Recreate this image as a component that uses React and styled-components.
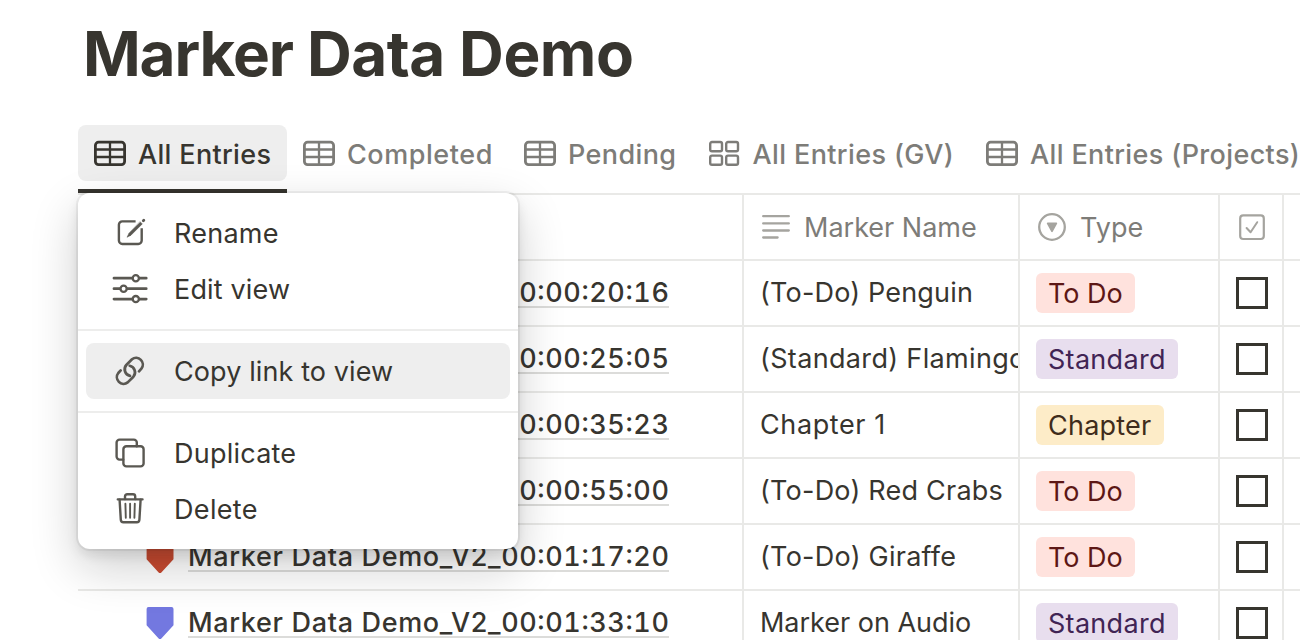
import React from "react";
import styled, { createGlobalStyle } from "styled-components";

const ink = "#37352f";
const muted = "#7d7c78";
const line = "#e9e9e7";

const GlobalStyle = createGlobalStyle`
  *, *::before, *::after { box-sizing: border-box; }
  body {
    margin: 0;
    background: #fff;
    color: ${ink};
    font-family: Inter, "Liberation Sans", sans-serif;
    -webkit-font-smoothing: antialiased;
  }
`;

const Page = styled.div`
  width: 1300px;
  height: 640px;
  overflow: hidden;
  padding-left: 78px;
`;

const Title = styled.h1`
  margin: 0;
  height: 125px;
  padding: 13px 0 0 5px;
  font-size: 62px;
  font-weight: 700;
  line-height: 81px;
  letter-spacing: -0.48px;
  white-space: nowrap;
`;

const TitleLead = styled.span`
  letter-spacing: -1.15px;
`;

const TabBar = styled.nav`
  display: flex;
  height: 70px;
  border-bottom: 2px solid ${line};
`;

const TabSlot = styled.div`
  position: relative;
  flex: none;
  width: ${(p) => p.$width}px;
  height: 68px;
  border-bottom: ${(p) => (p.$active ? `4px solid ${ink}` : "0")};
`;

const Tab = styled.div`
  display: flex;
  align-items: center;
  gap: 12px;
  height: 56px;
  padding: 0 16px;
  border-radius: 8px;
  background: ${(p) => (p.$active ? "#eeeeee" : "transparent")};
  color: ${(p) => (p.$active ? ink : muted)};
  font-size: 27px;
  font-weight: 500;
  letter-spacing: ${(p) => p.$spacing}px;
  white-space: nowrap;
  svg { flex: none; }
  span { padding-top: 2px; }
`;

const Menu = styled.div`
  position: absolute;
  z-index: 2;
  top: 68px;
  left: 0;
  width: 440px;
  border-radius: 12px;
  background: #fff;
  box-shadow: 0 0 0 2px rgba(15, 15, 15, 0.05), 0 6px 12px rgba(15, 15, 15, 0.1),
    0 18px 48px rgba(15, 15, 15, 0.2);
`;

const MenuGroup = styled.div`
  padding: 12px 8px;
  & + & { border-top: 2px solid #ededec; }
`;

const MenuItem = styled.div`
  display: flex;
  align-items: center;
  height: 56px;
  padding-left: 19px;
  gap: 19px;
  border-radius: 8px;
  background: ${(p) => (p.$active ? "#eeeeee" : "transparent")};
  font-size: 27px;
  letter-spacing: ${(p) => p.$spacing}px;
  white-space: nowrap;
  svg { flex: none; }
`;

const Row = styled.div`
  display: grid;
  grid-template-columns: 666px 276px 200px 64px 1fr;
  height: 66px;
  border-bottom: 2px solid ${line};
`;

const Cell = styled.div`
  display: flex;
  align-items: center;
  min-width: 0;
  overflow: hidden;
  padding-left: 16px;
  border-right: 2px solid ${line};
  font-size: 27px;
  letter-spacing: ${(p) => p.$spacing || 0}px;
  white-space: nowrap;
  &:last-child { border-right: 0; }
`;

const HeadCell = styled(Cell)`
  padding-left: 18px;
  gap: 14px;
  color: ${muted};
  svg { flex: none; }
`;

const NameCell = styled(Cell)`
  padding-left: 68px;
  gap: 14px;
  font-weight: 500;
  svg { flex: none; }
`;

const EntryLink = styled.span`
  width: 481px;
  height: 30px;
  line-height: 30px;
  border-bottom: 2px solid #dcdcda;
`;

const Prefix = styled.span`
  letter-spacing: 0.67px;
`;

const Timecode = styled.span`
  letter-spacing: 0.6px;
  font-variant-numeric: tabular-nums;
  font-feature-settings: "calt", "case";
`;

const Label = styled.span`
  margin-top: -2px;
`;

const tones = {
  red: ["#ffe2dd", "#5d1715"],
  purple: ["#e8deee", "#412454"],
  yellow: ["#fdecc8", "#402c1b"],
};

const Tag = styled.span`
  display: flex;
  align-items: center;
  height: 40px;
  width: ${(p) => p.$width}px;
  padding-left: 12px;
  border-radius: 6px;
  background: ${(p) => tones[p.$tone][0]};
  color: ${(p) => tones[p.$tone][1]};
  letter-spacing: ${(p) => p.$spacing}px;
`;

const Checkbox = styled.span`
  width: 32px;
  height: 32px;
  border: 3px solid ${ink};
`;

const TableIcon = () => (
  <svg width="32" height="26" viewBox="0 0 32 26" fill="none" stroke="currentColor">
    <rect x="1.4" y="2.2" width="29.2" height="22.4" rx="3.2" strokeWidth="2.8" />
    <path d="M16 2.5v22M2 9.5h28M2 17h28" strokeWidth="2.3" />
  </svg>
);

const GalleryIcon = () => (
  <svg width="32" height="26" viewBox="0 0 32 26" fill="none" stroke="currentColor" strokeWidth="2.4">
    <rect x="1.2" y="2" width="11.8" height="9.2" rx="1.8" />
    <rect x="17.2" y="2" width="11.8" height="9.2" rx="1.8" />
    <rect x="1.2" y="15.6" width="11.8" height="9.2" rx="1.8" />
    <rect x="17.2" y="15.6" width="11.8" height="9.2" rx="1.8" />
  </svg>
);

const MenuSvg = ({ children }) => (
  <svg
    width="50"
    height="50"
    viewBox="0 0 50 50"
    fill="none"
    stroke="#5a5852"
    strokeWidth="2.4"
    strokeLinecap="round"
    strokeLinejoin="round"
  >
    {children}
  </svg>
);

const RenameIcon = () => (
  <MenuSvg>
    <path
      d="M30.6 13.4H17.3a3.4 3.4 0 0 0-3.4 3.4v15.8a3.4 3.4 0 0 0 3.4 3.4h16a3.4 3.4 0 0 0 3.4-3.4V20.2"
      strokeLinecap="butt"
    />
    <path d="M35.3 13.9 37.3 15.9 26 27.2 22 29.3 24 25.2Z" fill="#5a5852" stroke="#5a5852" strokeWidth="0.5" />
    <path d="m38.3 12.7.5-.5" strokeWidth="2.8" />
  </MenuSvg>
);

const SlidersIcon = () => (
  <MenuSvg>
    <path d="M9 14.2h32.2M9 24.7h32.2M9 35.1h32.2" strokeWidth="2.8" />
    <g fill="#fff" strokeWidth="2.3">
      <circle cx="30.8" cy="14.2" r="3.1" />
      <circle cx="18.6" cy="24.7" r="3.1" />
      <circle cx="30.8" cy="35.1" r="3.1" />
    </g>
  </MenuSvg>
);

const LinkIcon = () => (
  <MenuSvg>
    <path d="M34 25.3 36.4 22.7A6.7 6.7 0 0 0 27 13.3L21.3 19A6.7 6.7 0 0 0 25 29.9" strokeWidth="2.7" />
    <path d="M15.7 24.4 13.3 27A6.7 6.7 0 0 0 22.7 36.4L28.4 30.7A6.7 6.7 0 0 0 24.7 19.8" strokeWidth="2.7" />
  </MenuSvg>
);

const DuplicateIcon = () => (
  <MenuSvg>
    <rect x="18.4" y="18.2" width="20.2" height="20.2" rx="3" />
    <path d="M18.2 31.6h-3.6a3 3 0 0 1-3-3V14.6a3 3 0 0 1 3-3h14.2a3 3 0 0 1 3 3v3.6" />
  </MenuSvg>
);

const TrashIcon = () => (
  <MenuSvg>
    <path d="M12.7 15.4h24.9" strokeWidth="2.2" />
    <path d="M20 15v-2.6a2.2 2.2 0 0 1 2.2-2.2h5.8a2.2 2.2 0 0 1 2.2 2.2V15" />
    <path d="m14.6 15.8 1.2 19.9a2.6 2.6 0 0 0 2.6 2.5h13.4a2.6 2.6 0 0 0 2.6-2.5L35.6 15.8" />
    <path d="m20.4 19.8.4 14M25.1 19.8v14M29.8 19.8l-.4 14" strokeWidth="1.9" />
  </MenuSvg>
);

const TextIcon = () => (
  <svg width="28" height="28" viewBox="0 0 28 28" stroke="#a5a49f" strokeWidth="2.3" strokeLinecap="round">
    <path d="M1.2 3.2h25.6M1.2 10.4h25.6M1.2 17.5h25.6M1.2 24.5h14.4" />
  </svg>
);

const SelectIcon = () => (
  <svg width="28" height="28" viewBox="0 0 28 28" fill="none">
    <circle cx="14" cy="14" r="12.8" stroke="#a5a49f" strokeWidth="2.3" />
    <path d="M9.6 10.4h8.8L14 18.4Z" fill="#a5a49f" stroke="#a5a49f" strokeWidth="1.6" strokeLinejoin="round" />
  </svg>
);

const CheckIcon = () => (
  <svg
    width="28"
    height="28"
    viewBox="0 0 28 28"
    fill="none"
    stroke="#a5a49f"
    strokeWidth="2.2"
    strokeLinecap="round"
    strokeLinejoin="round"
  >
    <rect x="2.2" y="2.4" width="23.6" height="23.6" rx="3" />
    <path d="m8.6 15 4 4.2 6.6-10" strokeWidth="2" />
  </svg>
);

const Marker = ({ color }) => (
  <svg width="28" height="34" viewBox="0 0 28 34" fill={color}>
    <path d="M2.5 1h23a2 2 0 0 1 2 2v16.2L15.6 32.2a2.2 2.2 0 0 1-3.2 0L.6 19.2V3a2 2 0 0 1 1.9-2Z" />
  </svg>
);

const tabs = [
  { label: "All Entries", width: 209, spacing: 0.33, active: true, icon: TableIcon },
  { label: "Completed", width: 221, spacing: 0.55, icon: TableIcon },
  { label: "Pending", width: 184.5, spacing: 0.38, icon: TableIcon },
  { label: "All Entries (GV)", width: 277.5, spacing: 0.38, icon: GalleryIcon },
  { label: "All Entries (Projects)", width: 330, spacing: 0.36, icon: TableIcon },
];

const menu = [
  [
    { label: "Rename", spacing: 0.25, icon: RenameIcon },
    { label: "Edit view", spacing: 0.16, icon: SlidersIcon },
  ],
  [{ label: "Copy link to view", spacing: 0.1, icon: LinkIcon, active: true }],
  [
    { label: "Duplicate", spacing: 0.23, icon: DuplicateIcon },
    { label: "Delete", spacing: 0.33, icon: TrashIcon },
  ],
];

const types = {
  todo: { label: "To Do", tone: "red", width: 99, spacing: -0.05 },
  standard: { label: "Standard", tone: "purple", width: 142, spacing: 0.3 },
  chapter: { label: "Chapter", tone: "yellow", width: 128, spacing: 0.22 },
};

const rows = [
  { time: "00:00:20:16", name: "(To-Do) Penguin", spacing: 0.18, type: "todo", color: "#c94a30" },
  { time: "00:00:25:05", name: "(Standard) Flamingo", spacing: 0.34, type: "standard", color: "#7378e0" },
  { time: "00:00:35:23", name: "Chapter 1", spacing: 0.6, type: "chapter", color: "#e09a3c" },
  { time: "00:00:55:00", name: "(To-Do) Red Crabs", spacing: 0.22, type: "todo", color: "#c94a30" },
  { time: "00:01:17:20", name: "(To-Do) Giraffe", spacing: 0.25, type: "todo", color: "#c94a30" },
  { time: "00:01:33:10", name: "Marker on Audio", spacing: -0.02, type: "standard", color: "#7378e0" },
];

const ViewMenu = () => (
  <Menu>
    {menu.map((group, i) => (
      <MenuGroup key={i}>
        {group.map(({ label, spacing, active, icon: Icon }) => (
          <MenuItem key={label} $active={active} $spacing={spacing}>
            <Icon />
            {label}
          </MenuItem>
        ))}
      </MenuGroup>
    ))}
  </Menu>
);

export default function App() {
  return (
    <Page>
      <GlobalStyle />
      <Title>
        <TitleLead>Marker</TitleLead> Data Demo
      </Title>
      <TabBar>
        {tabs.map(({ label, width, spacing, active, icon: Icon }) => (
          <TabSlot key={label} $width={width} $active={active}>
            <Tab $active={active} $spacing={spacing}>
              <Icon />
              <span>{label}</span>
            </Tab>
            {active && <ViewMenu />}
          </TabSlot>
        ))}
      </TabBar>
      <Row>
        <HeadCell />
        <HeadCell>
          <TextIcon />
          Marker Name
        </HeadCell>
        <HeadCell>
          <SelectIcon />
          Type
        </HeadCell>
        <HeadCell>
          <CheckIcon />
        </HeadCell>
        <HeadCell />
      </Row>
      {rows.map((row) => {
        const type = types[row.type];
        return (
          <Row key={row.time}>
            <NameCell>
              <Marker color={row.color} />
              <EntryLink>
                <Prefix>Marker Data Demo_V2_</Prefix>
                <Timecode>{row.time}</Timecode>
              </EntryLink>
            </NameCell>
            <Cell $spacing={row.spacing}>
              <Label>{row.name}</Label>
            </Cell>
            <Cell>
              <Tag $tone={type.tone} $width={type.width} $spacing={type.spacing}>
                {type.label}
              </Tag>
            </Cell>
            <Cell>
              <Checkbox />
            </Cell>
            <Cell />
          </Row>
        );
      })}
    </Page>
  );
}
